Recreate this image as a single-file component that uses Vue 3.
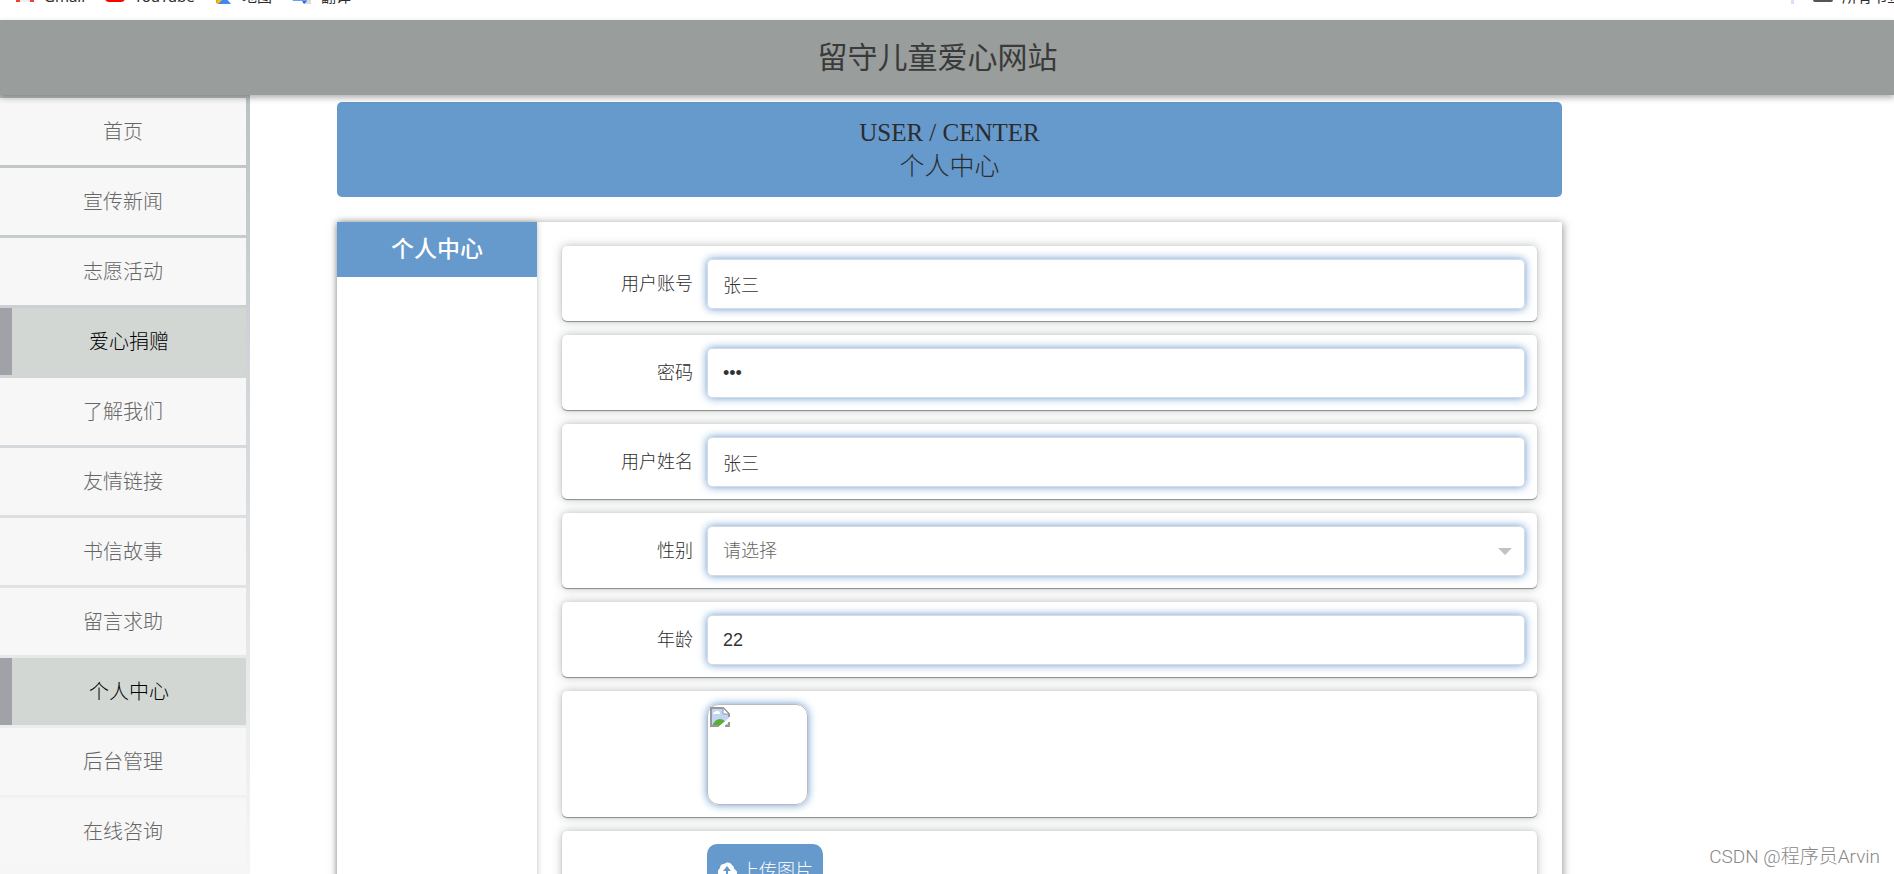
<script setup>
import { ref } from 'vue'

const menu = [
  { label: '首页' },
  { label: '宣传新闻' },
  { label: '志愿活动' },
  { label: '爱心捐赠', active: true },
  { label: '了解我们' },
  { label: '友情链接' },
  { label: '书信故事' },
  { label: '留言求助' },
  { label: '个人中心', active: true },
  { label: '后台管理' },
  { label: '在线咨询' },
]

const account = ref('张三')
const password = ref('123')
const name = ref('张三')
const gender = ref('')
const age = ref('22')
</script>

<template>
  <div class="page">
    <nav class="bookmarks" aria-label="书签">
      <a class="mark gmail" href="#">
        <svg width="20" height="16" viewBox="0 0 20 16"><path d="M1 1v15h4V7l5 4 5-4v9h4V1l-9 7z" fill="#ea4335" /><path d="M5 8l5 4 5-4v8H5z" fill="#f1f1f1" /></svg>
        <span>Gmail</span>
      </a>
      <a class="mark youtube" href="#">
        <svg width="20" height="16" viewBox="0 0 20 16"><rect width="20" height="16" rx="4" fill="#f00" /><path d="M8 4l6 4-6 4z" fill="#fff" /></svg>
        <span>YouTube</span>
      </a>
      <a class="mark maps" href="#">
        <svg width="18" height="18" viewBox="0 0 18 18"><path d="M1 1h10l-1 8-8 8H1z" fill="#34a853" /><path d="M2 18l8-7 6 7z" fill="#4285f4" /><path d="M1 15l9-8 2 2-9 9H2z" fill="#fbbc04" /></svg>
        <span>地图</span>
      </a>
      <a class="mark translate" href="#">
        <svg width="20" height="18" viewBox="0 0 20 18"><path d="M9 4h10v14h-7z" fill="#dadce0" /><path d="M0 0h11l4 15H2q-2 0-2-2z" fill="#669df6" /><path d="M10 15h5l-3 3z" fill="#3367d6" /></svg>
        <span>翻译</span>
      </a>
      <span class="divider"></span>
      <a class="mark all" href="#">
        <svg width="20" height="16" viewBox="0 0 20 16"><path d="M2 0h6l2 2h8q2 0 2 2v10q0 2-2 2H2q-2 0-2-2V2q0-2 2-2z" fill="#555" /></svg>
        <span>所有书签</span>
      </a>
    </nav>

    <header class="site-header">
      <h1>留守儿童爱心网站</h1>
    </header>

    <div class="body">
      <nav class="sidebar" aria-label="主菜单">
        <a v-for="item in menu" :key="item.label" href="#" class="menu-item" :class="{ active: item.active }">{{ item.label }}</a>
      </nav>

      <main class="content">
        <div class="banner">
          <span>USER / CENTER</span>
          <span>个人中心</span>
        </div>

        <section class="panel">
          <aside class="panel-side">
            <h2>个人中心</h2>
          </aside>
          <form class="form" @submit.prevent>
            <div class="row">
              <label for="account">用户账号</label>
              <input id="account" v-model="account" class="control" type="text">
            </div>
            <div class="row">
              <label for="password">密码</label>
              <input id="password" v-model="password" class="control" type="password">
            </div>
            <div class="row">
              <label for="name">用户姓名</label>
              <input id="name" v-model="name" class="control" type="text">
            </div>
            <div class="row">
              <label for="gender">性别</label>
              <div class="select-wrap">
                <select id="gender" v-model="gender" class="control">
                  <option value="">请选择</option>
                  <option value="男">男</option>
                  <option value="女">女</option>
                </select>
                <span class="caret"></span>
              </div>
            </div>
            <div class="row">
              <label for="age">年龄</label>
              <input id="age" v-model="age" class="control" type="text">
            </div>
            <div class="row offset">
              <div class="photo">
                <svg width="20" height="20" viewBox="0 0 20 20">
                  <path d="M1 1h13l5 5v13H1z" fill="#c3d4f5" />
                  <path d="M3 7q0-2 2-2 1-2 3-1 2 0 2 3z" fill="#fff" />
                  <path d="M2 19q3-7 8-7t8 7z" fill="#5bad35" />
                  <path d="M8 20L20 10v4l-6 6z" fill="#fff" />
                  <path d="M9 19H1V1h12l6 6v3M19 15v4h-4" fill="none" stroke="#999" stroke-width="2" />
                  <path d="M13 1v6h6z" fill="#fff" stroke="#999" />
                </svg>
              </div>
            </div>
            <div class="row offset">
              <button class="upload" type="button">
                <svg width="20" height="16" viewBox="0 0 20 16"><path d="M5 16a5 5 0 0 1-2-9 4 4 0 0 1 4-4 5 5 0 0 1 8 1 4 4 0 0 1 2 4 4 4 0 0 1-2 8z" fill="#fff" /><path d="M10 5l4 5h-3v4H9v-4H6z" fill="#6699cc" /></svg>
                <span>上传图片</span>
              </button>
            </div>
          </form>
        </section>
      </main>
    </div>

    <div class="watermark">CSDN @程序员Arvin</div>
  </div>
</template>

<style>
body {
  margin: 0;
}
</style>

<style scoped>
* {
  box-sizing: border-box;
}

.page {
  position: relative;
  display: flex;
  flex-direction: column;
  height: 100vh;
  overflow: hidden;
  background: #fff;
  color: #2c2c2c;
  font-family: "Liberation Sans", "Noto Sans CJK SC", sans-serif;
  font-weight: 300;
}

a {
  color: inherit;
  text-decoration: none;
}

.bookmarks {
  display: flex;
  flex: none;
  align-items: flex-start;
  height: 20px;
  overflow: hidden;
  padding-left: 15px;
  font-family: "Noto Sans", "Noto Sans CJK SC", sans-serif;
  font-size: 15px;
  font-weight: 400;
  line-height: 20px;
}

.mark {
  display: flex;
  flex: none;
  gap: 9px;
  margin-top: -14px;
}

.gmail {
  width: 90px;
}

.youtube {
  width: 110px;
}

.maps {
  width: 77px;
}

.divider {
  flex: none;
  width: 3px;
  height: 4px;
  margin-left: auto;
  background: #d3e3fd;
}

.all {
  width: 104px;
  margin-left: 19px;
  margin-right: -23px;
}

.site-header {
  position: relative;
  z-index: 2;
  flex: none;
  padding-right: 19px;
  background: #999d9b;
  box-shadow: 0 3px 6px rgba(0, 0, 0, 0.3);
  text-align: center;
}

h1 {
  margin: 0;
  color: #3a3a3a;
  font-size: 30px;
  font-weight: 400;
  line-height: 75px;
}

.body {
  display: flex;
  flex: 1;
  min-height: 0;
}

.sidebar {
  display: flex;
  flex: none;
  flex-direction: column;
  gap: 3px;
  width: 250px;
  padding: 3px 4px 0 0;
  background: linear-gradient(#bcc2c4, #cfd3d6 32%, #f6f6f6);
}

.menu-item {
  flex: none;
  padding-top: 1px;
  background: #f7f7f7;
  color: #666;
  font-size: 20px;
  line-height: 66px;
  text-align: center;
}

.menu-item.active {
  border-left: 12px solid #a1a2a7;
  background: #d2d7d3;
  color: #000;
}

.content {
  flex: 1;
  min-width: 0;
  max-width: 1312px;
  padding: 7px 0 0 87px;
}

.banner {
  display: flex;
  flex-direction: column;
  align-items: center;
  margin-bottom: 25px;
  padding: 14px 0 13px;
  border-radius: 5px;
  background: #6699cc;
  font-family: "Liberation Serif", "Noto Sans CJK SC", serif;
  font-size: 25px;
  line-height: 34px;
}

.panel {
  display: flex;
  box-shadow: 1px 1px 8px rgba(90, 100, 95, 0.65);
}

.panel-side {
  flex: none;
  width: 200px;
  box-shadow: 0 0 6px rgba(90, 100, 95, 0.4);
}

h2 {
  margin: 0;
  background: #6699cc;
  color: #fff;
  font-size: 23px;
  font-weight: 500;
  line-height: 55px;
  text-align: center;
}

.form {
  display: flex;
  flex: 1;
  flex-direction: column;
  gap: 14px;
  min-width: 0;
  padding: 24px 25px;
}

.row {
  display: flex;
  align-items: center;
  padding: 13px 12px 12px 0;
  border-radius: 5px;
  background: #fff;
  box-shadow: 0 1px 1px #888c8a, 0 0 10px rgba(110, 120, 115, 0.5);
}

.row.offset {
  padding: 13px 12px 12px 145px;
}

.row label {
  flex: none;
  width: 145px;
  padding-right: 14px;
  font-size: 18px;
  line-height: 50px;
  text-align: right;
}

.control {
  flex: 1;
  width: 100%;
  min-width: 0;
  height: 50px;
  margin: 0;
  padding: 0 15px;
  border: 1px solid #d5dbe6;
  border-radius: 5px;
  outline: none;
  background: #fff;
  box-shadow: 0 0 8px #6699cc;
  color: #333;
  font-family: inherit;
  font-size: 18px;
  font-weight: 300;
}

.select-wrap {
  position: relative;
  display: flex;
  flex: 1;
}

select.control {
  appearance: none;
  color: #666;
}

.caret {
  position: absolute;
  top: 22px;
  right: 13px;
  border: 7px solid transparent;
  border-top-color: #c2c2c2;
  border-bottom: 0;
  pointer-events: none;
}

.photo {
  width: 101px;
  height: 101px;
  padding: 2px;
  border: 1px solid #bbb;
  border-radius: 12px;
  box-shadow: 0 0 8px #6699cc;
}

.photo svg {
  display: block;
}

.upload {
  display: flex;
  align-items: center;
  justify-content: center;
  gap: 4px;
  width: 116px;
  height: 50px;
  padding: 0;
  border: 0;
  border-radius: 10px;
  background: #6699cc;
  color: #fff;
  font-family: inherit;
  font-size: 18px;
  font-weight: 300;
}

.watermark {
  position: absolute;
  right: 14px;
  bottom: 4px;
  color: #888;
  font-family: Roboto, "Noto Sans CJK SC", sans-serif;
  font-size: 19px;
  line-height: 26px;
}
</style>
